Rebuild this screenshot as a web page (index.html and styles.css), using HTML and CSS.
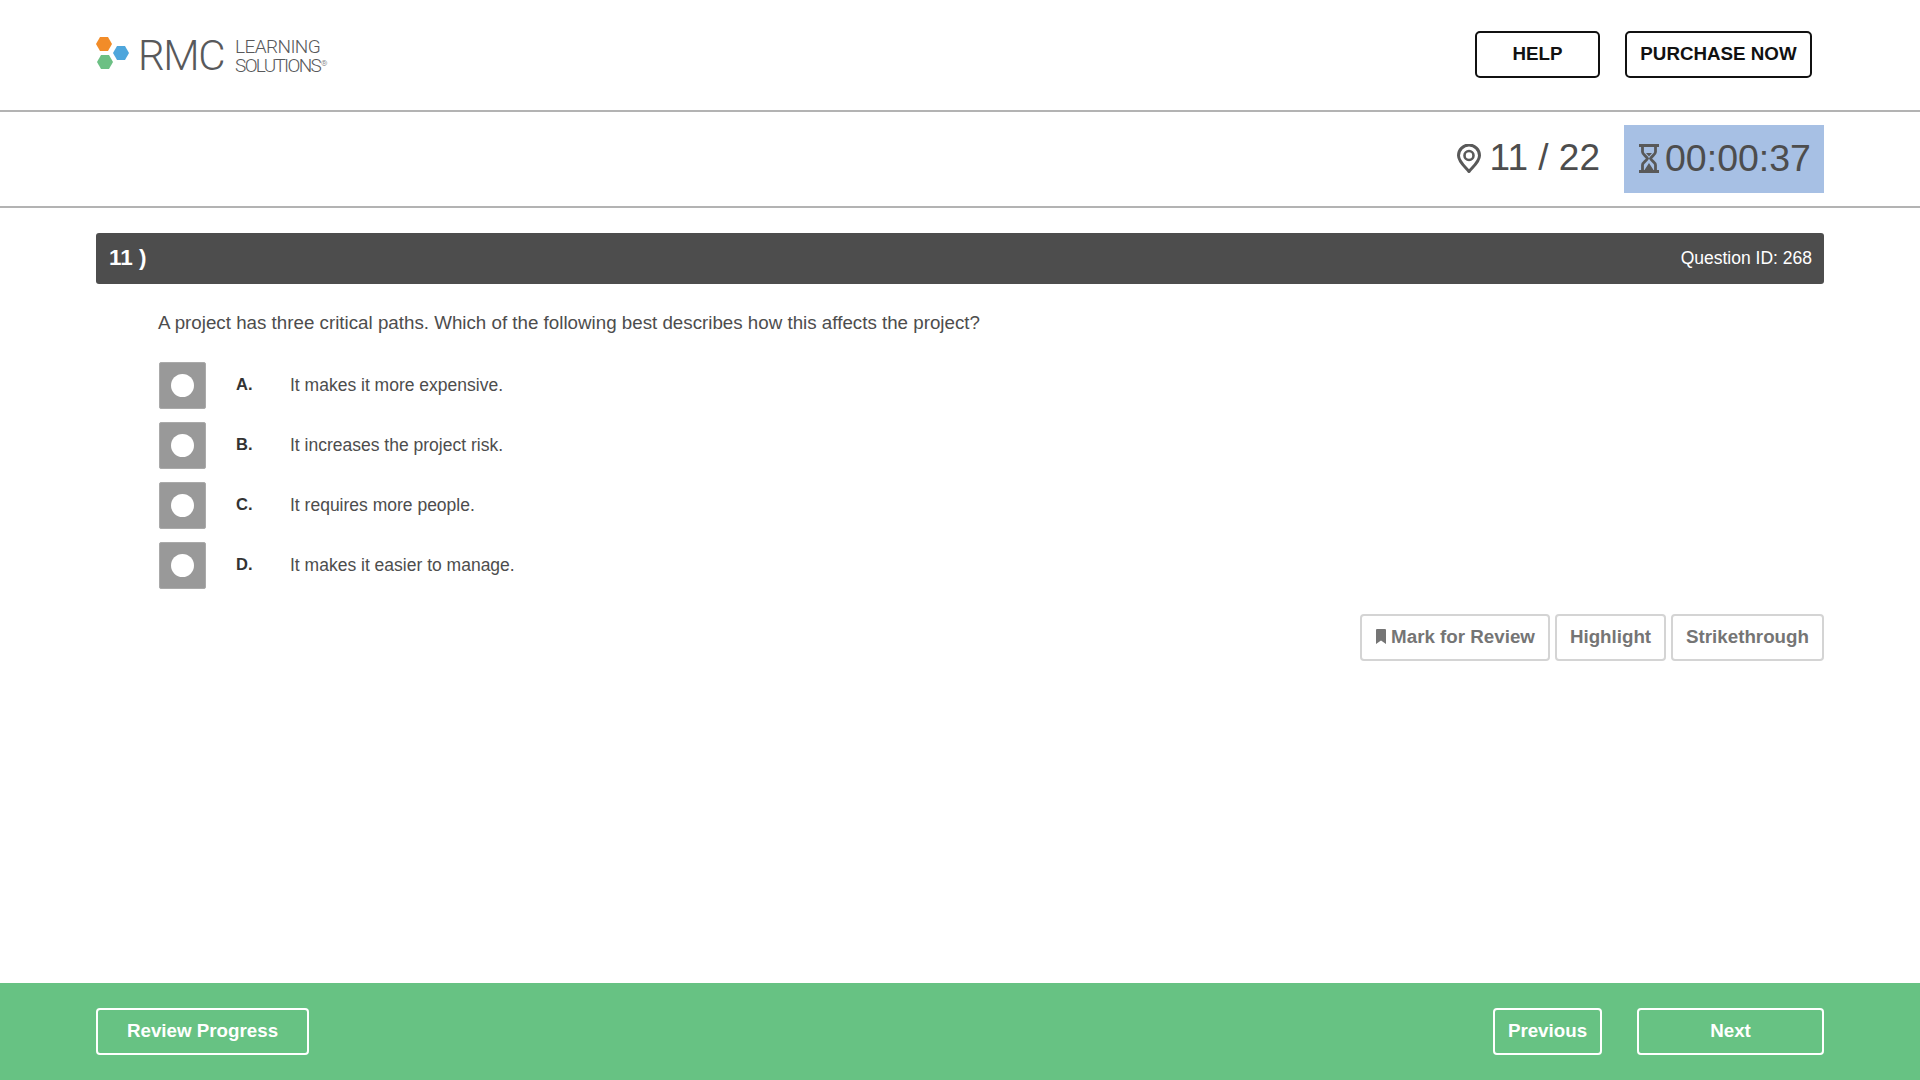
FILE: index.html
```html
<!DOCTYPE html>
<html lang="en">
<head>
<meta charset="utf-8">
<title>RMC Learning Solutions</title>
<link rel="stylesheet" href="styles.css">
</head>
<body>
<div class="page">
  <header class="topbar">
    <div class="logo">
      <svg class="logo-mark" width="33" height="36" viewBox="0 0 33 36" aria-hidden="true">
        <polygon points="0,8 4,1 12,1 16,8 12,15 4,15" fill="#f28c28"/>
        <polygon points="17,17 21,10 29,10 33,17 29,24 21,24" fill="#4ea6dc"/>
        <polygon points="1,26 5,19 13,19 17,26 13,33 5,33" fill="#6cc084"/>
      </svg>
      <span class="logo-rmc">RMC</span>
      <span class="logo-sub"><span class="sub-a">LEARNING</span><span class="sub-b">SOLUTIONS<sup>®</sup></span></span>
    </div>
    <nav class="top-actions">
      <a class="top-btn help">HELP</a>
      <a class="top-btn purchase">PURCHASE NOW</a>
    </nav>
  </header>

  <section class="status">
    <div class="progress">
      <svg width="24" height="29" viewBox="0 0 24 29" aria-hidden="true">
        <path d="M12 27.500 C9 23.500 1.500 18 1.500 11.500 A10.500 10.500 0 0 1 22.500 11.500 C22.500 18 15 23.500 12 27.500 Z" fill="none" stroke="#595959" stroke-width="3" stroke-linejoin="round"/>
        <circle cx="12" cy="11.500" r="4.500" fill="none" stroke="#595959" stroke-width="2.600"/>
      </svg>
      <span>11 / 22</span>
    </div>
    <div class="timer">
      <svg width="20" height="29" viewBox="0 0 20 29" aria-hidden="true">
        <path d="M0 1.500H20M0 27.500H20" stroke="#595959" stroke-width="3" fill="none"/>
        <path d="M3.500 2V8C3.500 10.500 7.500 12 8.500 14.500C7.500 17 3.500 18.500 3.500 21V27M16.500 2V8C16.500 10.500 12.500 12 11.500 14.500C12.500 17 16.500 18.500 16.500 21V27" stroke="#595959" stroke-width="2.800" fill="none"/>
        <path d="M7 9H13L10 12.500Z M5.500 26L10 19L14.500 26Z" fill="#595959"/>
      </svg>
      <span>00:00:37</span>
    </div>
  </section>

  <main class="content">
    <div class="q-head">
      <span class="q-num">11 )</span>
      <span class="q-id">Question ID: 268</span>
    </div>
    <div class="q-body">
      <p class="q-text">A project has three critical paths. Which of the following best describes how this affects the project?</p>
      <ul class="answers">
        <li class="answer"><span class="radio"><i></i></span><b class="letter">A.</b><span class="answer-text">It makes it more expensive.</span></li>
        <li class="answer"><span class="radio"><i></i></span><b class="letter">B.</b><span class="answer-text">It increases the project risk.</span></li>
        <li class="answer"><span class="radio"><i></i></span><b class="letter">C.</b><span class="answer-text">It requires more people.</span></li>
        <li class="answer"><span class="radio"><i></i></span><b class="letter">D.</b><span class="answer-text">It makes it easier to manage.</span></li>
      </ul>
    </div>
    <div class="tools">
      <a class="tool mark">
        <svg width="10" height="15" viewBox="0 0 10 15" aria-hidden="true"><path d="M0 1A1 1 0 0 1 1 0H9A1 1 0 0 1 10 1V15L5 11.500L0 15Z" fill="#757575"/></svg>
        Mark for Review</a>
      <a class="tool highlight">Highlight</a>
      <a class="tool strike">Strikethrough</a>
    </div>
  </main>

  <footer class="footer">
    <a class="foot-btn review">Review Progress</a>
    <div class="foot-right">
      <a class="foot-btn prev">Previous</a>
      <a class="foot-btn next">Next</a>
    </div>
  </footer>
</div>
</body>
</html>
```
FILE: styles.css
```css
* { box-sizing: border-box; }
html, body { margin: 0; padding: 0; }
body {
  font-family: "Liberation Sans", Arial, sans-serif;
  color: #4d4d4d;
  background: #fff;
}
.page {
  display: flex;
  flex-direction: column;
  height: 100vh;
  overflow: hidden;
}
.topbar {
  flex: none;
  height: 112px;
  border-bottom: 2px solid #b3b3b3;
  padding: 31px 96px 0 96px;
  display: flex;
  justify-content: space-between;
  align-items: flex-start;
}
.logo {
  display: flex;
  align-items: flex-start;
  height: 47px;
  color: #58595b;
}
.logo-mark { margin: 5px 0 0 0; flex: none; }
.logo-rmc {
  font-family: Roboto, sans-serif;
  font-weight: 300;
  font-size: 42px;
  line-height: 47px;
  letter-spacing: -1.4px;
  margin-left: 9px;
  margin-top: 1px;
}
.logo-sub {
  display: flex;
  flex-direction: column;
  font-family: Roboto, sans-serif;
  font-weight: 300;
  font-size: 19px;
  line-height: 19px;
  margin-left: 11px;
  margin-top: 6px;
}
.sub-a { letter-spacing: -0.6px; }
.sub-b { letter-spacing: -1.7px; }
.logo-sub sup { font-size: 8px; line-height: 0; vertical-align: 6px; letter-spacing: 0; margin-left: 1px; }
.top-actions { display: flex; gap: 25px; padding-right: 12px; }
.top-btn {
  height: 47px;
  border: 2px solid #111;
  border-radius: 5px;
  color: #111;
  font-weight: 700;
  font-size: 18.75px;
  display: flex;
  align-items: center;
  justify-content: center;
  padding-bottom: 1px;
}
.help { width: 125px; }
.purchase { width: 187px; }
.status {
  flex: none;
  height: 96px;
  border-bottom: 2px solid #b3b3b3;
  padding: 13px 96px 0 0;
  display: flex;
  justify-content: flex-end;
  align-items: flex-start;
  gap: 24px;
  font-size: 37.5px;
  color: #4d4d4d;
}
.progress, .timer {
  height: 68px;
  display: flex;
  align-items: center;
  padding-bottom: 2px;
}
.progress { gap: 9px; font-size: 37px; }
.timer {
  width: 200px;
  background: #a7c0e4;
  padding-left: 15px;
  gap: 6px;
}
.content {
  flex: 1;
  padding: 25px 96px 0 96px;
}
.q-head {
  height: 51px;
  background: #4d4d4d;
  border-radius: 3px;
  color: #fff;
  padding: 0 12px 0 13px;
  display: flex;
  justify-content: space-between;
  align-items: center;
}
.q-num { font-weight: 700; font-size: 22.5px; padding-bottom: 2px; }
.q-id { font-size: 17.5px; }
.q-body { padding: 27px 0 0 62px; }
.q-text { margin: 0; font-size: 18.75px; line-height: 24px; }
.answers { list-style: none; margin: 27px 0 0 1px; padding: 0; display: flex; flex-direction: column; gap: 13px; }
.answer { display: flex; align-items: center; height: 47px; font-size: 17.5px; color: #4d4d4d; }
.radio {
  width: 47px;
  height: 47px;
  background: #999;
  border: 1px solid #aaa;
  border-radius: 2px;
  display: flex;
  align-items: center;
  justify-content: center;
  flex: none;
}
.radio i { display: block; width: 23px; height: 23px; border-radius: 50%; background: #fff; }
.letter { width: 54px; margin-left: 30px; font-size: 16.5px; color: #333; position: relative; top: -1px; }
.tools { display: flex; justify-content: flex-end; gap: 5px; margin-top: 25px; }
.tool {
  height: 47px;
  border: 2px solid #d4d4d4;
  border-radius: 4px;
  color: #757575;
  font-weight: 700;
  font-size: 18.75px;
  display: flex;
  align-items: center;
  justify-content: center;
  gap: 5px;
  padding-bottom: 2px;
}
.mark { width: 190px; padding-left: 1px; }
.highlight { width: 111px; }
.strike { width: 153px; }
.footer {
  flex: none;
  height: 97px;
  background: #67c283;
  padding: 25px 96px 0 96px;
  display: flex;
  justify-content: space-between;
  align-items: flex-start;
}
.foot-right { display: flex; gap: 35px; }
.foot-btn {
  height: 47px;
  border: 2px solid #fff;
  border-radius: 4px;
  color: #fff;
  font-weight: 700;
  font-size: 18.75px;
  display: flex;
  align-items: center;
  justify-content: center;
  padding-bottom: 1px;
}
.review { width: 213px; }
.prev { width: 109px; }
.next { width: 187px; }
```
